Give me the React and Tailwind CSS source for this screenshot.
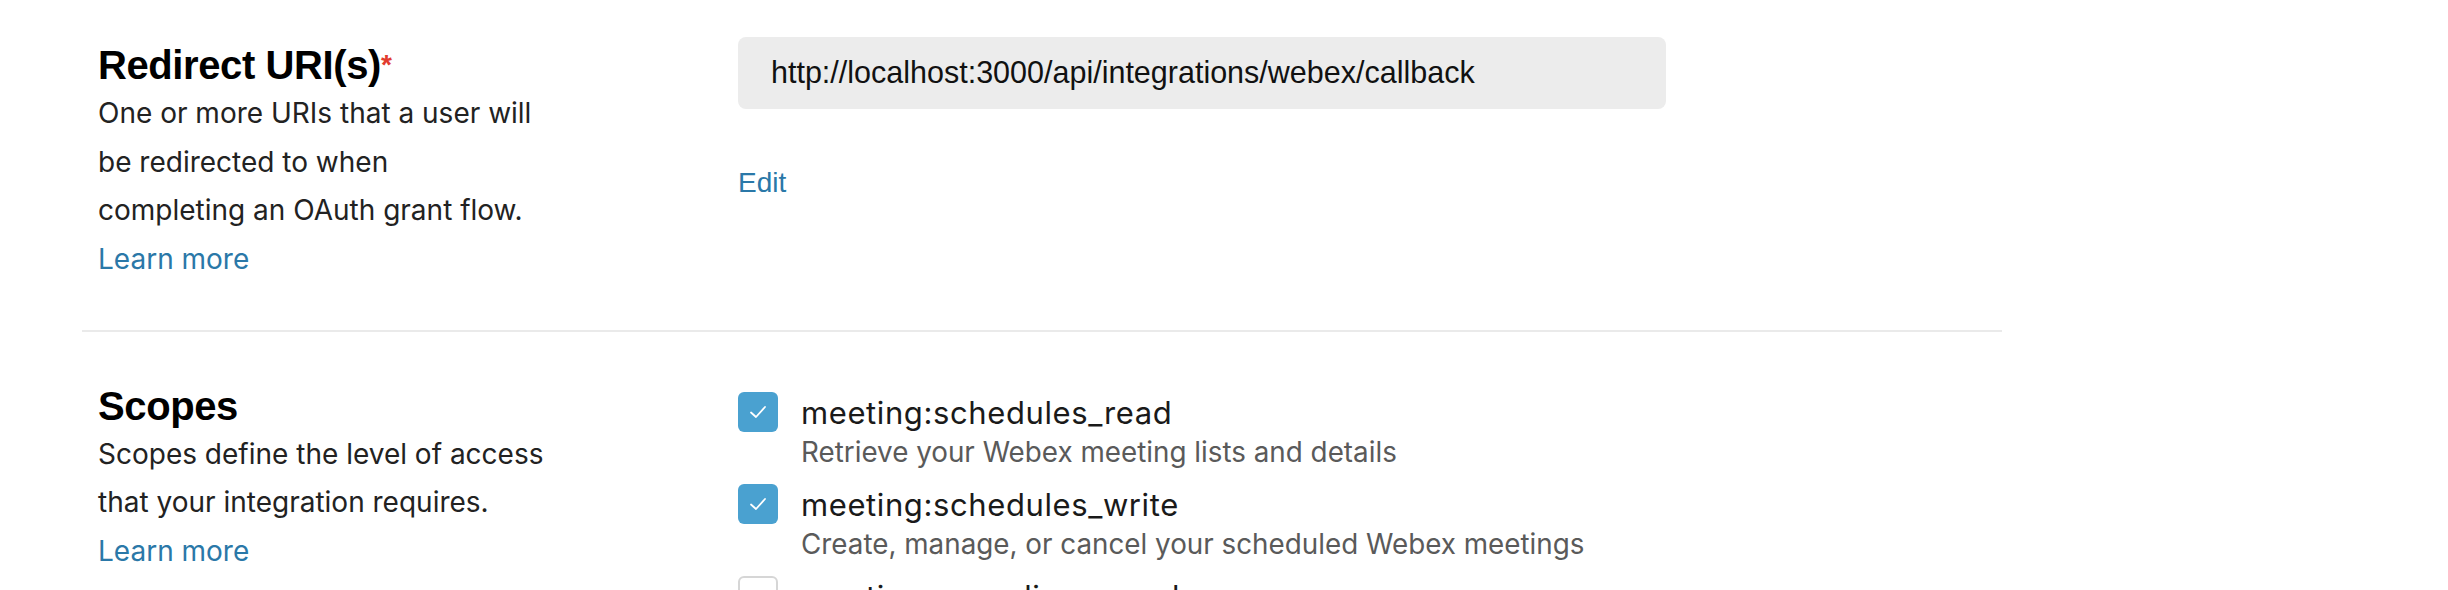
import React from "react";

const inter = { fontFamily: "Inter, 'Liberation Sans', sans-serif" };

function Check({ checked }) {
  if (checked) {
    return (
      <div className="w-[40px] h-[40px] rounded-[6px] bg-[#4aa1d0] flex items-center justify-center shrink-0">
        <svg width="20" height="16" viewBox="0 0 20 16" fill="none">
          <path d="M3 8.5 L8 13 L17 3" stroke="white" strokeWidth="1.8" strokeLinecap="round" strokeLinejoin="round" />
        </svg>
      </div>
    );
  }
  return <div className="w-[40px] h-[40px] rounded-[6px] border-2 border-[#d6d6d6] bg-white shrink-0" />;
}

function Scope({ title, desc, checked }) {
  return (
    <div className="flex items-start gap-[23px]">
      <Check checked={checked} />
      <div className="flex flex-col mt-[3px]">
        <div className="font-[Inter,sans-serif] text-[31px] leading-[36px] tracking-[0.6px] text-[#1a1a1a]">{title}</div>
        <div className="font-[Inter,sans-serif] text-[27.8px] leading-[42px] text-[#5a5a5a]">{desc}</div>
      </div>
    </div>
  );
}

export default function App() {
  return (
    <div className="w-[2448px] h-[590px] bg-white overflow-hidden relative" style={inter}>
      <div className="pl-[82px] w-[2002px]">
        {/* Redirect URIs */}
        <div className="flex pt-[41px] pb-[47px]">
          <div className="w-[656px] pl-[16px] shrink-0">
            <h2 className="font-['Liberation_Sans',sans-serif] font-bold text-[40px] leading-[48px] text-black tracking-[-0.4px]">
              Redirect URI(s)<span className="text-[#e23b2e] text-[28px] align-top">*</span>
            </h2>
            <p className="font-[Inter,sans-serif] text-[28px] leading-[48.5px] text-[#222222]">
              One or more URIs that a user will
              <br />
              be redirected to when
              <br />
              completing an OAuth grant flow.
            </p>
            <a className="block font-[Inter,sans-serif] text-[28px] leading-[48px] text-[#2a78a8]">Learn more</a>
          </div>
          <div className="flex flex-col -mt-[4px]">
            <div className="w-[928px] h-[72px] rounded-[8px] bg-[#ececec] flex items-center pl-[33px]">
              <span className="font-['Liberation_Sans',sans-serif] text-[30.5px] text-[#111111]">
                http://localhost:3000/api/integrations/webex/callback
              </span>
            </div>
            <a className="mt-[54px] font-['Liberation_Sans',sans-serif] text-[28px] leading-[40px] text-[#2a78a8]">Edit</a>
          </div>
        </div>
        <div className="h-[2px] bg-[#eaeaea]" />
        {/* Scopes */}
        <div className="flex pt-[50px]">
          <div className="w-[656px] pl-[16px] shrink-0">
            <h2 className="font-['Liberation_Sans',sans-serif] font-bold text-[40px] leading-[48px] text-black tracking-[-0.4px]">
              Scopes
            </h2>
            <p className="font-[Inter,sans-serif] text-[28px] leading-[48.5px] text-[#222222]">
              Scopes define the level of access
              <br />
              that your integration requires.
            </p>
            <a className="block font-[Inter,sans-serif] text-[28px] leading-[48px] text-[#2a78a8]">Learn more</a>
          </div>
          <div className="flex flex-col gap-[11px] pt-[10px]">
            <Scope checked title="meeting:schedules_read" desc="Retrieve your Webex meeting lists and details" />
            <Scope checked title="meeting:schedules_write" desc="Create, manage, or cancel your scheduled Webex meetings" />
            <Scope checked={false} title="meeting:recordings_read" desc="Retrieve your Webex meeting recordings" />
          </div>
        </div>
      </div>
    </div>
  );
}
